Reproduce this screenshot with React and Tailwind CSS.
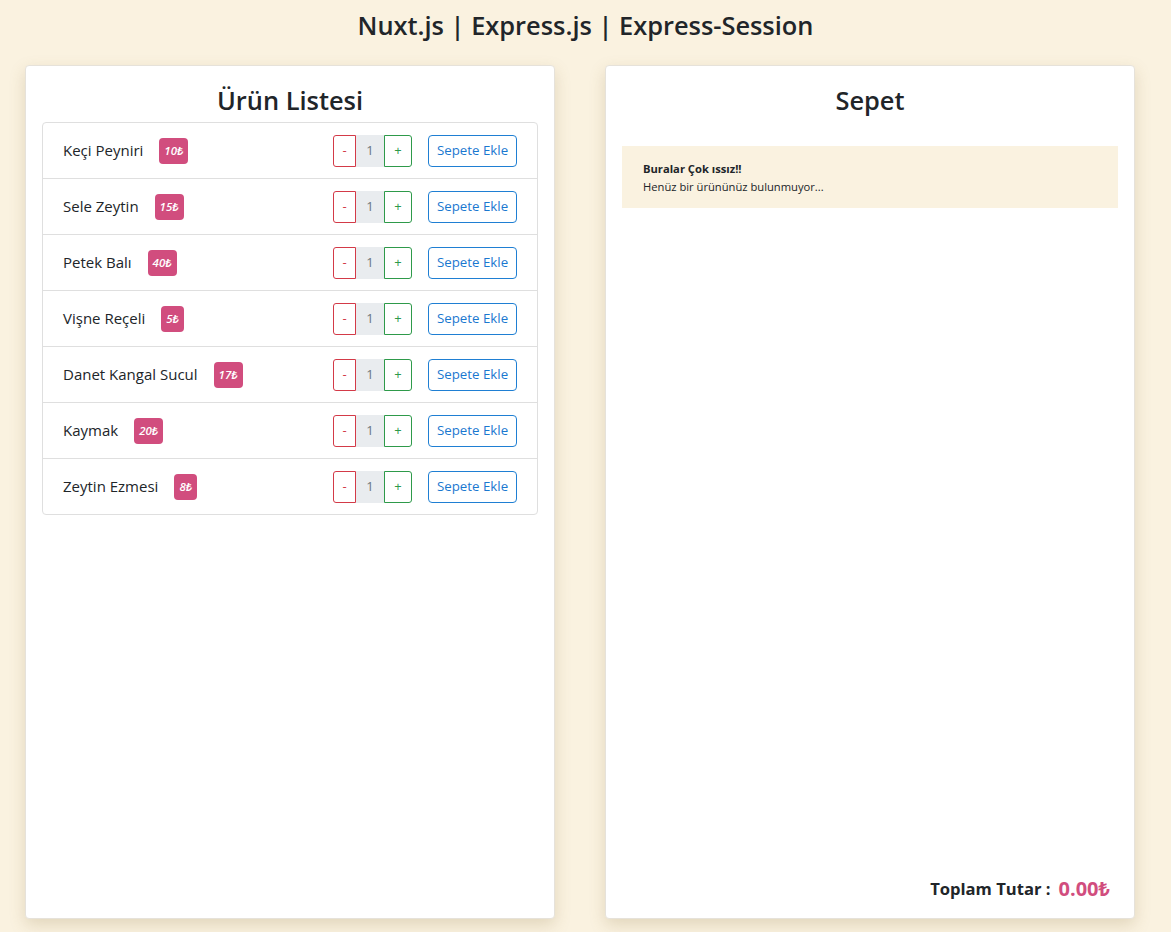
import React from "react";

const products = [
  { name: "Keçi Peyniri", price: 10 },
  { name: "Sele Zeytin", price: 15 },
  { name: "Petek Balı", price: 40 },
  { name: "Vişne Reçeli", price: 5 },
  { name: "Danet Kangal Sucul", price: 17 },
  { name: "Kaymak", price: 20 },
  { name: "Zeytin Ezmesi", price: 8 },
];

function Row({ p, first }) {
  return (
    <div
      className={
        "flex items-center px-5 " +
        (first ? "h-[55px]" : "h-[56px] border-t border-[#dfdfdf]")
      }
    >
      <span className="text-[15px] text-[#212529]">{p.name}</span>
      <span className="ml-4 h-[26px] min-w-[21px] px-[5px] flex items-center justify-center rounded-[4px] bg-[#d14d7e] text-white text-[11.5px] italic font-semibold">
        {p.price}₺
      </span>
      <div className="ml-auto flex items-center h-[32px]">
        <button className="h-[32px] w-[23px] border border-[#d33a48] rounded-l-[3px] text-[#d33a48] text-[13px] bg-white flex items-center justify-center">
          -
        </button>
        <div className="h-[32px] w-[28px] bg-[#e9ecef] text-[#6c757d] text-[13px] flex items-center justify-center">
          1
        </div>
        <button className="h-[32px] w-[28px] border border-[#2e9a4a] rounded-r-[3px] text-[#2e9a4a] text-[13px] bg-white flex items-center justify-center">
          +
        </button>
        <button className="ml-4 h-[32px] w-[89px] border border-[#1f7fd3] rounded-[4px] text-[#1a78d0] text-[13.3px] bg-white flex items-center justify-center">
          Sepete Ekle
        </button>
      </div>
    </div>
  );
}

export default function App() {
  return (
    <div
      className="min-h-[932px] w-full bg-[#faf2e0] text-[#212529]"
      style={{ fontFamily: '"Open Sans", "Noto Sans", sans-serif' }}
    >
      <h1 className="pt-[8px] text-center text-[25.4px] leading-[34px] font-semibold">
        Nuxt.js | Express.js | Express-Session
      </h1>
      <div className="flex gap-[50px] pl-[25px] pt-[23px]">
        <div className="w-[530px] h-[854px] bg-white border border-[#e6e2da] rounded-[4px] shadow-[0_6px_16px_rgba(140,115,60,0.22)] px-[16px] pt-[17px] flex flex-col">
          <h2 className="text-center text-[25.4px] leading-[34px] font-semibold mb-[5px]">
            Ürün Listesi
          </h2>
          <div className="border border-[#dfdfdf] rounded-[4px]">
            {products.map((p, i) => (
              <Row key={p.name} p={p} first={i === 0} />
            ))}
          </div>
        </div>
        <div className="w-[530px] h-[854px] bg-white border border-[#e6e2da] rounded-[4px] shadow-[0_6px_16px_rgba(140,115,60,0.22)] px-[16px] pt-[17px] flex flex-col">
          <h2 className="text-center text-[25.4px] leading-[34px] font-semibold mb-[29px]">
            Sepet
          </h2>
          <div className="bg-[#faf2e0] pl-[21px] pt-[14px] pb-[12px] text-[11.2px] leading-[18px]">
            <div className="font-bold">Buralar Çok ıssız!!</div>
            <div>Henüz bir ürününüz bulunmuyor...</div>
          </div>
          <div className="mt-auto mb-[14px] flex items-center justify-end pr-[8px] gap-[8px]">
            <span className="text-[16.6px] font-bold">Toplam Tutar :</span>
            <span className="text-[20px] font-bold text-[#d14d7e]">0.00₺</span>
          </div>
        </div>
      </div>
    </div>
  );
}
